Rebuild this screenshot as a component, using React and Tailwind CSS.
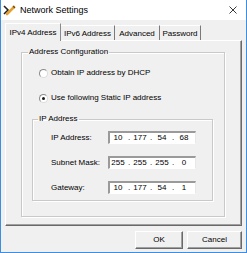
const ipRows = [
  { label: "IP Address:", parts: ["10", "177", "54", "68"] },
  { label: "Subnet Mask:", parts: ["255", "255", "255", "0"] },
  { label: "Gateway:", parts: ["10", "177", "54", "1"] },
];

const tabs = [
  { label: "IPv4 Address", w: "w-[56px]", active: true },
  { label: "IPv6 Address", w: "w-[54px]" },
  { label: "Advanced", w: "w-[45px]" },
  { label: "Password", w: "w-[41px]" },
];

function Radio({ checked, label }) {
  return (
    <div className="flex h-[12px] items-center pl-[17px]">
      <span className="flex h-[9px] w-[9px] items-center justify-center rounded-full border border-t-[#8a8a8a] border-l-[#8a8a8a] border-r-[#dcdcdc] border-b-[#dcdcdc] bg-white">
        {checked && <span className="h-[3px] w-[3px] rounded-full bg-[#1a1a1a]" />}
      </span>
      <span className="ml-[3px]">{label}</span>
    </div>
  );
}

function IpField({ parts }) {
  return (
    <div className="flex h-[13px] w-[88px] items-center border-t-2 border-l-2 border-t-[#9a9a9a] border-l-[#9a9a9a] border-b border-r border-b-white border-r-[#e8e8e8] bg-white">
      {parts.map((p, i) => (
        <div key={i} className="flex items-center">
          {i > 0 && <span className="w-[6px] text-center">.</span>}
          <span className="w-[16px] text-center">{p}</span>
        </div>
      ))}
    </div>
  );
}

export default function App() {
  return (
    <div
      className="flex h-[253px] w-[247px] flex-col border-x border-b border-[#3d8ee0] bg-[#f0f0f0] text-[8px] leading-[10px] text-black"
      style={{ fontFamily: '"Liberation Sans", Arial, sans-serif' }}
    >
      {/* title bar */}
      <div className="flex h-[20px] shrink-0 items-center bg-white">
        <svg className="ml-[2px]" width="13" height="12" viewBox="0 0 13 12">
          <path d="M1 2 L5 6 L1 10" fill="none" stroke="#222" strokeWidth="1.6" />
          <path d="M4 10 L11 3" stroke="#e3a12f" strokeWidth="2.6" strokeLinecap="round" />
          <path d="M10 2 L12 4" stroke="#7a4a10" strokeWidth="1.2" />
        </svg>
        <span className="ml-[4px] text-[9px]">Network Settings</span>
        <svg className="ml-auto mr-[9px]" width="8" height="8" viewBox="0 0 8 8">
          <path d="M0.5 0.5 L7.5 7.5 M7.5 0.5 L0.5 7.5" stroke="#222" strokeWidth="0.9" />
        </svg>
      </div>

      <div className="flex flex-1 flex-col px-[4px] pt-[3px]">
        {/* tabs */}
        <div className="flex h-[17px] items-end">
          {tabs.map((t) =>
            t.active ? (
              <div
                key={t.label}
                className={`relative z-10 -mb-px flex h-[18px] ${t.w} items-center justify-center border-l border-t border-r border-l-white border-t-white border-r-[#8a8a8a] bg-[#f0f0f0]`}
              >
                {t.label}
              </div>
            ) : (
              <div
                key={t.label}
                className={`flex h-[15px] ${t.w} items-center justify-center border-t border-r border-t-white border-r-[#7a7a7a] pt-px`}
              >
                {t.label}
              </div>
            )
          )}
        </div>

        {/* tab panel */}
        <div className="flex h-[186px] flex-col border border-l-white border-t-white border-r-[#696969] border-b-[#696969] shadow-[inset_-1px_-1px_0_#a0a0a0]">
          <fieldset className="ml-[15px] mt-[6px] h-[170px] w-[204px] border border-[#c9c9c9] shadow-[1px_1px_0_#fff,inset_1px_1px_0_#fff]">
            <legend className="ml-[6px] px-[1px] leading-[10px]">Address Configuration</legend>
            <div className="mt-[10px] flex flex-col gap-[13px]">
              <Radio label="Obtain IP address by DHCP" />
              <Radio checked label="Use following Static IP address" />
            </div>

            <fieldset className="ml-[10px] mt-[10px] h-[87px] w-[181px] border border-[#c9c9c9] shadow-[1px_1px_0_#fff,inset_1px_1px_0_#fff]">
              <legend className="ml-[5px] px-[1px] leading-[10px]">IP Address</legend>
              <div className="flex flex-col gap-[12px] pt-[7px]">
                {ipRows.map((r) => (
                  <div key={r.label} className="flex h-[13px] items-center pl-[18px]">
                    <span className="w-[57px]">{r.label}</span>
                    <IpField parts={r.parts} />
                  </div>
                ))}
              </div>
            </fieldset>
          </fieldset>
        </div>

        {/* buttons */}
        <div className="mt-[5px] flex justify-end gap-[4px]">
          <button className="h-[18px] w-[48px] border border-t-white border-l-white border-r-[#696969] border-b-[#696969] shadow-[inset_-1px_-1px_0_#a0a0a0]">
            OK
          </button>
          <button className="h-[18px] w-[55px] border border-t-white border-l-white border-r-[#696969] border-b-[#696969] shadow-[inset_-1px_-1px_0_#a0a0a0]">
            Cancel
          </button>
        </div>
      </div>
    </div>
  );
}
